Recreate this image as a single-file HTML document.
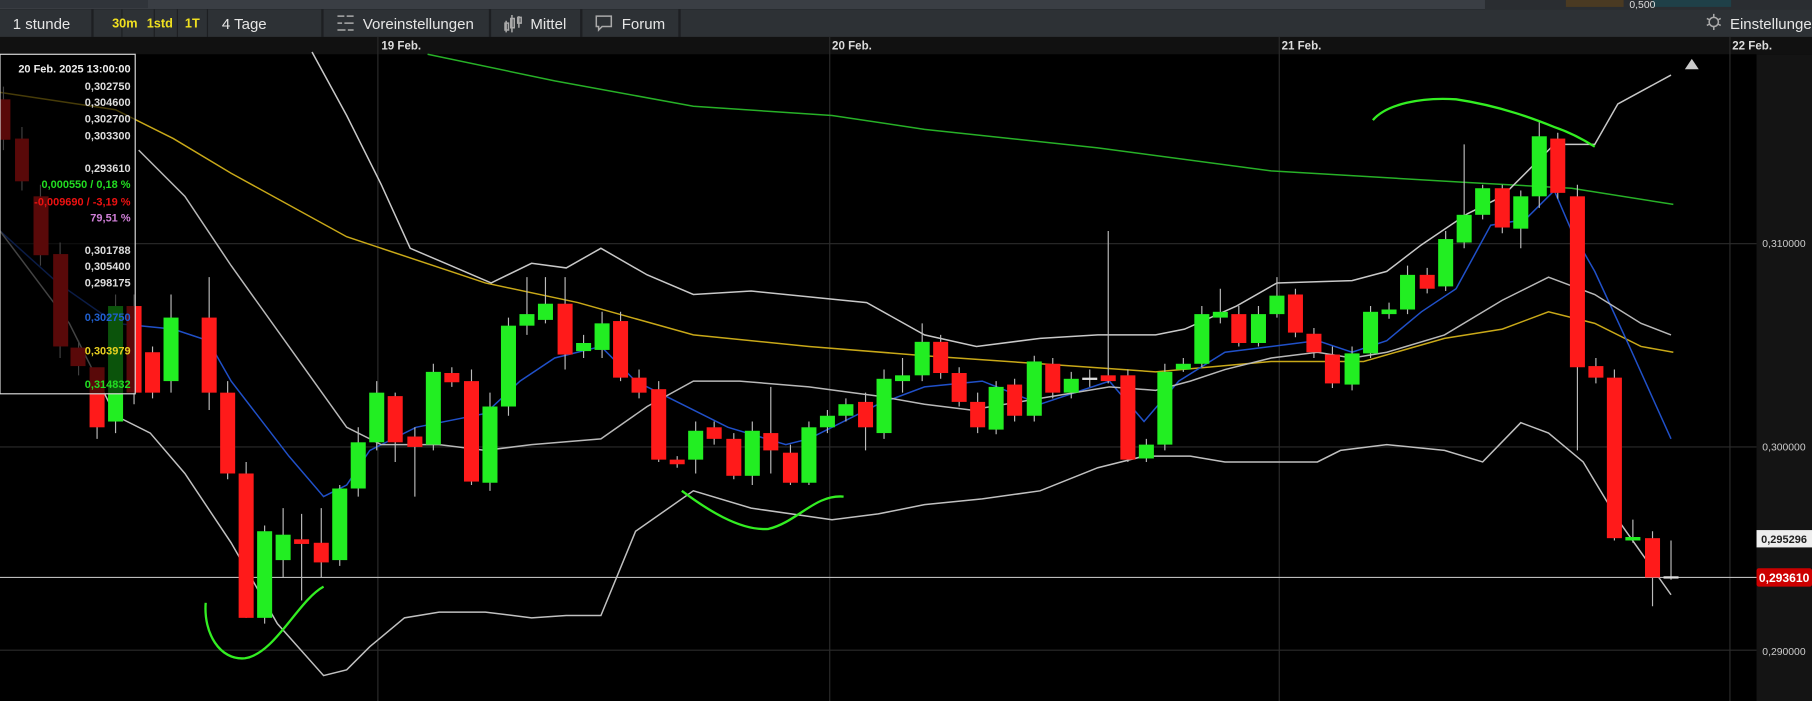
<!DOCTYPE html>
<html><head><meta charset="utf-8"><style>
html,body{margin:0;padding:0;background:#000;overflow:hidden}
svg{display:block}
text{font-family:"Liberation Sans",sans-serif}
</style></head><body>
<svg width="1812" height="701" viewBox="0 0 1568 607" preserveAspectRatio="none" xmlns="http://www.w3.org/2000/svg">
<rect width="1568" height="607" fill="#000"/>
<!-- top strip -->
<rect x="0" y="0" width="1568" height="8" fill="#3a3e44"/>
<rect x="0" y="0" width="128" height="7" fill="#30343a"/>
<rect x="1285" y="0" width="283" height="8" fill="#2a2d31"/>
<rect x="1355" y="0" width="50" height="6" fill="#4a3a22"/>
<rect x="1430" y="0" width="68" height="6" fill="#1f4048"/>
<text x="1410" y="7" font-size="9" fill="#ddd">0,500</text>
<!-- toolbar -->
<rect x="0" y="8" width="1568" height="24" fill="#2d3135"/>
<g fill="#1d1f22">
<rect x="79" y="8" width="2" height="24"/><rect x="105" y="8" width="1" height="24"/><rect x="133" y="8" width="1" height="24"/><rect x="153" y="8" width="1" height="24"/><rect x="179" y="8" width="1" height="24"/><rect x="278" y="8" width="2" height="24"/><rect x="423" y="8" width="2" height="24"/><rect x="502" y="8" width="2" height="24"/><rect x="587" y="8" width="2" height="24"/>
</g>
<g font-size="13" fill="#e6e6e6">
<text x="11" y="25">1 stunde</text>
<text x="192" y="25">4 Tage</text>
<text x="314" y="25">Voreinstellungen</text>
<text x="459" y="25">Mittel</text>
<text x="538" y="25">Forum</text>
<text x="1497" y="25">Einstellunge</text>
</g>
<g font-size="11" font-weight="bold" fill="#f0e020">
<text x="97" y="24">30m</text><text x="127" y="24">1std</text><text x="160" y="24">1T</text>
</g>
<!-- icons -->
<g stroke="#aaa" stroke-width="1.3" fill="none">
<path d="M292 14h6M300 14h6M292 20h4M298 20h8M292 26h7M301 26h5"/>
<path d="M438 18v10M437 20h3v6h-3zM443 13v15M442 16h3v8h-3zM449 14v10M448 15h3v5h-3z"/>
<path d="M516 14h13v9h-8l-3 3v-3h-2z"/>
<circle cx="1483" cy="19" r="4"/><path d="M1483 12v3M1483 23v3M1477 16l2 1M1487 21l2 1M1477 22l2-1M1487 17l2-1"/>
</g>
<!-- date axis -->
<rect x="0" y="32" width="1568" height="15" fill="#111"/>
<g font-size="10" font-weight="bold" fill="#ddd">
<text x="330" y="43">19 Feb.</text><text x="720" y="43">20 Feb.</text><text x="1109" y="43">21 Feb.</text><text x="1499" y="43">22 Feb.</text>
</g>
<!-- right axis -->
<rect x="1520" y="47" width="48" height="560" fill="#141414"/>
<!-- grid -->
<g stroke="#2b2b2b" stroke-width="1">
<path d="M327 32V607M718 32V607M1107 32V607M1497 32V607M0 211H1520M0 387H1520M0 563H1520"/>
</g>
<g font-size="9" fill="#ccc">
<text x="1525" y="214">0,310000</text><text x="1525" y="390">0,300000</text><text x="1525" y="567">0,290000</text>
</g>
<path d="M0 500H1520" stroke="#bbb" stroke-width="1"/>
<rect x="1520" y="459" width="48" height="15" fill="#eee"/>
<text x="1524" y="470" font-size="9.5" font-weight="bold" fill="#222">0,295296</text>
<rect x="1520" y="492" width="48" height="16" rx="2" fill="#c00"/>
<text x="1522" y="504" font-size="10.5" font-weight="bold" fill="#fff">0,293610</text>
<path d="M1458 60l6-9 6 9z" fill="#ccc"/>
<!-- MA lines -->
<g fill="none" stroke-width="1.3">
<polyline stroke="#27b027" points="370,47 480,70 600,92 720,100 800,112 950,128 1100,148 1270,158 1360,163 1448,177"/>
<polyline stroke="#c8a818" points="0,80 100,95 150,120 200,150 300,205 420,245 500,262 600,290 700,300 800,308 900,315 1000,322 1100,313 1180,313 1250,293 1300,285 1340,270 1380,280 1420,300 1448,305"/>
<polyline stroke="#2050c8" points="0,200 50,245 100,280 150,285 180,295 200,330 250,395 280,430 300,420 320,390 360,370 420,358 450,330 480,310 520,300 550,330 590,350 630,370 680,385 700,380 760,350 800,335 850,330 900,350 960,330 990,365 1020,330 1060,305 1100,300 1140,295 1170,305 1200,295 1230,270 1260,250 1290,195 1320,190 1345,165 1360,200 1380,235 1410,300 1446,380"/>
<polyline stroke="#c8c8c8" points="270,45 300,100 330,160 355,215 390,230 425,245 460,228 490,232 520,215 560,238 600,255 650,252 710,258 750,262 800,290 845,300 900,293 950,290 1000,290 1025,285 1070,265 1105,245 1170,243 1200,235 1230,212 1270,185 1300,170 1330,140 1345,125 1380,125 1400,90 1446,65"/>
<polyline stroke="#b8b8b8" points="120,130 160,170 200,230 250,300 300,370 330,385 380,385 420,390 460,385 520,380 560,352 600,330 640,330 700,335 760,343 800,350 840,355 900,345 960,335 1000,338 1030,330 1060,320 1100,310 1140,305 1170,310 1200,305 1250,290 1300,260 1340,240 1380,255 1420,280 1446,290"/>
<polyline stroke="#c0c0c0" points="0,200 60,280 100,360 130,375 160,410 200,470 240,540 280,585 300,580 320,560 350,535 380,530 420,530 460,535 490,533 520,533 550,460 600,425 650,440 720,450 760,445 800,437 850,432 900,425 950,405 990,395 1030,395 1060,400 1100,400 1140,400 1160,390 1200,385 1250,390 1283,400 1316,366 1340,375 1370,400 1400,450 1446,515"/>
</g>
<!-- wicks -->
<g stroke="#bbb" stroke-width="1">
<path d="M3 75V130M19 110V165M35 160V230M52 210V310M68 295V325M84 320V380M100 255V375M116 255V350M132 300V345M148 255V340M181 240V355M197 330V415M213 400V535M229 455V540M245 440V500M261 445V520M278 440V500M294 420V490M310 370V430M326 330V390M342 340V400M359 370V430M375 315V390M391 318V335M408 320V420M424 340V425M440 275V360M456 240V290M472 240V280M489 240V320M505 290V310M521 270V310M537 270V330M553 320V345M570 330V400M586 395V405M602 365V410M618 365V385M635 375V415M651 365V420M667 335V410M684 385V420M700 365V420M716 355V375M732 345V365M749 340V390M765 320V380M781 310V340M798 280V330M814 290V328M830 318V352M846 340V375M862 330V376M878 328V365M895 308V365M911 310V345M927 322V345M943 320V335M959 200V332M976 320V400M992 380V400M1008 315V390M1024 310V322M1040 265V318M1056 250V280M1072 265V300M1089 265V300M1105 240V275M1121 250V292M1137 284V310M1153 300V336M1170 300V338M1186 265V310M1202 262V276M1218 230V272M1235 232V254M1251 200V252M1267 125V215M1283 160V190M1300 160V202M1316 165V215M1332 105V180M1348 115V172M1365 160V390M1381 310V332M1397 320V468M1413 450V470M1430 460V525M1446 468V502"/>
</g>
<!-- candles -->
<g fill="#ff1a1a">
<rect x="-3" y="86" width="12" height="35"/><rect x="13" y="120" width="12" height="37"/><rect x="29" y="170" width="13" height="51"/><rect x="46" y="220" width="13" height="80"/><rect x="61" y="301" width="13" height="16"/>
<rect x="77.5" y="318" width="13" height="52"/><rect x="109.5" y="265" width="13" height="75"/><rect x="125.5" y="305" width="13" height="35"/><rect x="174.5" y="275" width="13" height="65"/><rect x="190.5" y="340" width="13" height="70"/><rect x="206.5" y="410" width="13" height="125"/><rect x="254.5" y="467" width="13" height="4"/><rect x="271.5" y="470" width="13" height="17"/><rect x="335.5" y="343" width="13" height="40"/><rect x="352.5" y="378" width="13" height="9"/><rect x="384.5" y="323" width="13" height="8"/><rect x="401.5" y="330" width="13" height="87"/><rect x="482.5" y="263" width="13" height="44"/><rect x="530.5" y="278" width="13" height="49"/><rect x="546.5" y="327" width="13" height="13"/><rect x="563.5" y="337" width="13" height="61"/><rect x="579.5" y="398" width="13" height="4"/><rect x="611.5" y="370" width="13" height="10"/><rect x="628.5" y="380" width="13" height="32"/><rect x="660.5" y="375" width="13" height="15"/><rect x="677.5" y="392" width="13" height="26"/><rect x="742.5" y="348" width="13" height="22"/><rect x="807.5" y="296" width="13" height="27"/><rect x="823.5" y="323" width="13" height="25"/><rect x="839.5" y="348" width="13" height="22"/><rect x="871.5" y="333" width="13" height="27"/><rect x="904.5" y="315" width="13" height="25"/><rect x="952.5" y="325" width="13" height="5"/><rect x="969.5" y="325" width="13" height="73"/><rect x="1065.5" y="272" width="13" height="25"/><rect x="1114.5" y="255" width="13" height="33"/><rect x="1130.5" y="289" width="13" height="16"/><rect x="1146.5" y="307" width="13" height="25"/><rect x="1228.5" y="238" width="13" height="12"/><rect x="1293.5" y="163" width="13" height="34"/><rect x="1341.5" y="120" width="13" height="47"/><rect x="1358.5" y="170" width="13" height="148"/><rect x="1374.5" y="317" width="13" height="10"/><rect x="1390.5" y="327" width="13" height="139"/><rect x="1423.5" y="466" width="13" height="34"/>
</g>
<g fill="#22ee22">
<rect x="93.5" y="265" width="13" height="100"/><rect x="141.5" y="275" width="13" height="55"/><rect x="222.5" y="460" width="13" height="75"/><rect x="238.5" y="463" width="13" height="22"/><rect x="287.5" y="423" width="13" height="62"/><rect x="303.5" y="383" width="13" height="40"/><rect x="319.5" y="340" width="13" height="43"/><rect x="368.5" y="322" width="13" height="63"/><rect x="417.5" y="352" width="13" height="66"/><rect x="433.5" y="282" width="13" height="70"/><rect x="449.5" y="272" width="13" height="10"/><rect x="465.5" y="263" width="13" height="14"/><rect x="498.5" y="297" width="13" height="7"/><rect x="514.5" y="280" width="13" height="23"/><rect x="595.5" y="373" width="13" height="25"/><rect x="644.5" y="373" width="13" height="39"/><rect x="693.5" y="370" width="13" height="48"/><rect x="709.5" y="360" width="13" height="10"/><rect x="725.5" y="350" width="13" height="10"/><rect x="758.5" y="328" width="13" height="47"/><rect x="774.5" y="325" width="13" height="5"/><rect x="791.5" y="296" width="13" height="29"/><rect x="855.5" y="335" width="13" height="37"/><rect x="888.5" y="313" width="13" height="47"/><rect x="920.5" y="328" width="13" height="12"/><rect x="985.5" y="385" width="13" height="12"/><rect x="1001.5" y="322" width="13" height="63"/><rect x="1017.5" y="315" width="13" height="5"/><rect x="1033.5" y="272" width="13" height="43"/><rect x="1049.5" y="270" width="13" height="5"/><rect x="1082.5" y="272" width="13" height="25"/><rect x="1098.5" y="256" width="13" height="16"/><rect x="1163.5" y="306" width="13" height="27"/><rect x="1179.5" y="270" width="13" height="36"/><rect x="1195.5" y="268" width="13" height="4"/><rect x="1211.5" y="238" width="13" height="30"/><rect x="1244.5" y="207" width="13" height="41"/><rect x="1260.5" y="186" width="13" height="24"/><rect x="1276.5" y="163" width="13" height="23"/><rect x="1309.5" y="170" width="13" height="28"/><rect x="1325.5" y="118" width="13" height="52"/><rect x="1406.5" y="465" width="13" height="3"/>
</g>
<rect x="936.5" y="327" width="13" height="2" fill="#ddd"/><rect x="1439.5" y="499" width="13" height="2" fill="#ddd"/>
<!-- hand-drawn curves -->
<g fill="none" stroke="#33ee22" stroke-width="2">
<path d="M178 522C176 548 190 572 212 570C238 566 258 520 280 508"/>
<path d="M590 425C610 440 640 460 665 458C690 452 705 428 730 430"/>
<path d="M1188 104C1200 90 1230 84 1260 86C1300 92 1330 104 1345 110C1360 115 1372 122 1380 127"/>
</g>
<!-- info box -->
<rect x="0" y="47" width="117" height="294" fill="rgba(0,0,0,0.65)" stroke="#ddd" stroke-width="1"/>
<g font-size="9.5" font-weight="bold" text-anchor="end">
<text x="113" y="63" fill="#eee">20 Feb. 2025 13:00:00</text>
<text x="113" y="78" fill="#ddd">0,302750</text>
<text x="113" y="92" fill="#ddd">0,304600</text>
<text x="113" y="106" fill="#ddd">0,302700</text>
<text x="113" y="121" fill="#ddd">0,303300</text>
<text x="113" y="149" fill="#ddd">0,293610</text>
<text x="113" y="163" fill="#22dd22">0,000550 / 0,18 %</text>
<text x="113" y="178" fill="#ee1111">-0,009690 / -3,19 %</text>
<text x="113" y="192" fill="#d080d8">79,51 %</text>
<text x="113" y="220" fill="#ddd">0,301788</text>
<text x="113" y="234" fill="#ddd">0,305400</text>
<text x="113" y="248" fill="#ddd">0,298175</text>
<text x="113" y="278" fill="#2060d0">0,302750</text>
<text x="113" y="307" fill="#e8d020">0,303979</text>
<text x="113" y="336" fill="#22dd22">0,314832</text>
</g>
</svg>
</body></html>
